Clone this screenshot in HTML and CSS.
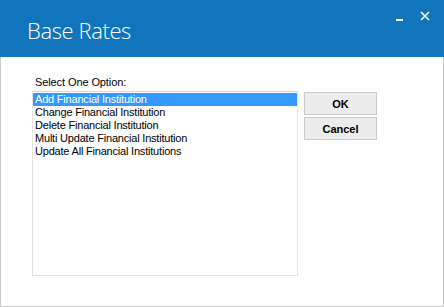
FILE: index.html
```html
<!DOCTYPE html>
<html lang="en">
<head>
    <meta charset="UTF-8">
    <meta name="viewport" content="width=device-width, initial-scale=1.0">
    <title>Base Rates</title>
    <link rel="stylesheet" href="styles.css">
</head>
<body>
    <div class="window">
        <div class="titlebar">
            <h1 class="title">Base Rates</h1>
            <div class="controls">
                <span class="minimize"></span>
                <svg class="close" width="10" height="10" viewBox="0 0 10 10">
                    <path d="M1 1 L9 9 M9 1 L1 9" stroke="#fff" stroke-width="1.6"/>
                </svg>
            </div>
        </div>
        <div class="content">
            <div class="picker">
                <label class="caption">Select One Option:</label>
                <ul class="listbox">
                    <li class="selected">Add Financial Institution</li>
                    <li>Change Financial Institution</li>
                    <li>Delete Financial Institution</li>
                    <li>Multi Update Financial Institution</li>
                    <li>Update All Financial Institutions</li>
                </ul>
            </div>
            <div class="buttons">
                <button class="btn">OK</button>
                <button class="btn">Cancel</button>
            </div>
        </div>
    </div>
</body>
</html>
```

FILE: styles.css
```css
body {
    margin: 0;
    font-family: 'Liberation Sans', Arial, sans-serif;
    background: #fff;
}
.window {
    width: 444px;
    height: 307px;
    box-sizing: border-box;
    border: 1px solid #c9c9c9;
    border-top: none;
}
.titlebar {
    height: 57px;
    margin: 0 -1px;
    background: #1075bd;
    display: flex;
    justify-content: space-between;
}
.title {
    margin: 0;
    padding: 15px 0 0 27px;
    font-family: 'Open Sans', sans-serif;
    font-weight: 300;
    font-size: 22px;
    color: #fff;
    letter-spacing: -0.4px;
}
.controls {
    display: flex;
    align-items: flex-start;
    gap: 17px;
    padding: 11px 14px 0 0;
}
.minimize {
    width: 7px;
    height: 2px;
    background: #fff;
    margin-top: 8px;
}
.content {
    display: flex;
    padding: 19px 0 0 31px;
}
.picker {
    display: flex;
    flex-direction: column;
}
.caption {
    font-size: 11px;
    color: #000;
    padding-left: 3px;
    height: 15px;
    letter-spacing: -0.1px;
}
.listbox {
    list-style: none;
    margin: 0;
    padding: 1px 0 0 0;
    width: 264px;
    height: 182px;
    border: 1px solid #e3e3e3;
    border-top-color: #d5d5d5;
    font-size: 11px;
    letter-spacing: -0.2px;
}
.listbox li {
    height: 13px;
    line-height: 13px;
    padding-left: 2px;
    color: #000;
}
.listbox li.selected {
    background: #3399ff;
    color: #fff;
}
.buttons {
    display: flex;
    flex-direction: column;
    gap: 2px;
    padding: 16px 0 0 6px;
}
.btn {
    width: 73px;
    height: 23px;
    margin: 0;
    padding: 0;
    background: #ececec;
    border: 1px solid #c9c9c9;
    font-family: 'Liberation Sans', Arial, sans-serif;
    font-size: 11px;
    font-weight: bold;
    color: #000;
}
```
